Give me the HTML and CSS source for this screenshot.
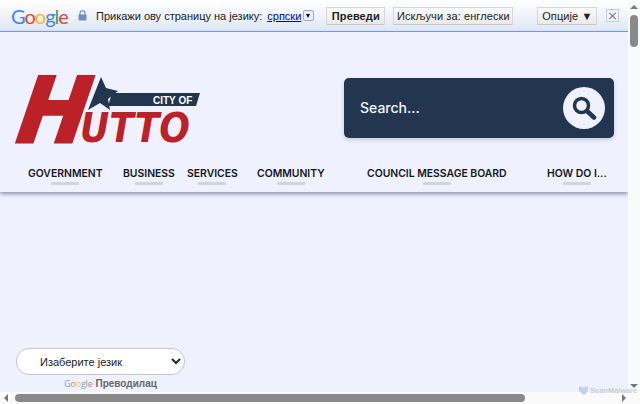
FILE: index.html
```html
<!DOCTYPE html>
<html lang="en">
<head>
    <meta charset="UTF-8">
    <meta name="viewport" content="width=device-width, initial-scale=1.0">
    <title>City of Hutto</title>
    <link rel="stylesheet" href="styles.css">
</head>
<body>
    <div class="window">
        <div class="page">
            <div class="translate-bar">
                <div class="google-logo"><span class="g-blue">G</span><span class="g-red">o</span><span class="g-yellow">o</span><span class="g-blue">g</span><span class="g-green">l</span><span class="g-red">e</span></div>
                <svg class="lock" width="9" height="11" viewBox="0 0 9 11">
                    <path d="M2 5V3.2a2.5 2.5 0 0 1 5 0V5" fill="none" stroke="#7a97c8" stroke-width="1.3"/>
                    <rect x="0.5" y="4.6" width="8" height="6" rx="1" fill="#6d8fc6"/>
                </svg>
                <span class="prompt">Прикажи ову страницу на језику:</span>
                <a class="lang-link" href="#">српски</a>
                <span class="lang-arrow"></span>
                <button class="bar-btn btn-translate">Преведи</button>
                <button class="bar-btn btn-never">Искључи за: енглески</button>
                <button class="bar-btn btn-options">Опције ▼</button>
                <span class="bar-close">
                    <svg width="12" height="12" viewBox="0 0 12 12"><path d="M2.5 2.5l7 7M9.5 2.5l-7 7" stroke="#777" stroke-width="1.2"/></svg>
                </span>
            </div>

            <header class="site-header">
                <div class="brand-row">
                    <svg class="logo" width="190" height="72" viewBox="0 0 190 72">
                        <text class="logo-h" transform="translate(1 68) skewX(-9) scale(0.93 1)">H</text>
                        <text class="logo-utto" x="66" y="68" textLength="110" lengthAdjust="spacingAndGlyphs">UTTO</text>
                        <polygon points="98,19 186,19 182,32 94,32" fill="#22364f"/>
                        <polygon points="87,3 92,14 104,17 94,25 96,36 86,29 74,36" fill="#22364f"/>
                        <text class="logo-cityof" x="139" y="30">CITY OF</text>
                    </svg>
                    <div class="search-box">
                        <span class="search-text">Search...</span>
                        <span class="search-btn">
                            <svg width="26" height="26" viewBox="0 0 26 26">
                                <circle cx="10.5" cy="10.5" r="7" fill="none" stroke="#22364f" stroke-width="3.5"/>
                                <path d="M16 16l7 6.5" stroke="#22364f" stroke-width="4.5" stroke-linecap="round"/>
                            </svg>
                        </span>
                    </div>
                </div>
                <nav class="main-nav">
                    <a class="nav-item" href="#">GOVERNMENT</a>
                    <a class="nav-item" href="#">BUSINESS</a>
                    <a class="nav-item" href="#">SERVICES</a>
                    <a class="nav-item" href="#">COMMUNITY</a>
                    <a class="nav-item" href="#">COUNCIL MESSAGE BOARD</a>
                    <a class="nav-item" href="#">HOW DO I...</a>
                </nav>
            </header>

            <div class="translate-widget">
                <select class="lang-select">
                    <option>Изаберите језик</option>
                </select>
                <div class="powered">
                    <span class="powered-logo"><span class="g-blue">G</span><span class="g-red">o</span><span class="g-yellow">o</span><span class="g-blue">g</span><span class="g-green">l</span><span class="g-red">e</span></span>
                    <span>Преводилац</span>
                </div>
            </div>
        </div>

        <div class="scroll-v">
            <span class="arrow arrow-up"></span>
            <span class="thumb-v"></span>
            <span class="arrow arrow-down"></span>
        </div>
        <div class="scroll-h">
            <span class="arrow arrow-left"></span>
            <span class="thumb-h"></span>
            <span class="arrow arrow-right"></span>
        </div>
        <div class="scroll-corner"></div>

        <div class="watermark">
            <svg width="11" height="11" viewBox="0 0 11 11"><path d="M1 1l4 1.5L10 1v5l-4 4-5-4z" fill="#bcd2f2"/></svg>
            <span>ScanMalware</span>
        </div>
    </div>
</body>
</html>
```

FILE: styles.css
```css
:root {
    --page-bg: #eff1fe;
    --navy: #22364f;
    --red: #bb2127;
    --bar-bg: #fafafb;
}

html, body {
    margin: 0;
    height: 100%;
    overflow: hidden;
}

body {
    font-family: 'Liberation Sans', Arial, sans-serif;
    background-color: var(--bar-bg);
}

.window {
    position: relative;
    display: grid;
    grid-template-columns: 628px 12px;
    grid-template-rows: 392px 12px;
    height: 404px;
}

.page {
    display: flex;
    flex-direction: column;
    background-color: var(--page-bg);
    overflow: hidden;
}

/* translate bar */
.translate-bar {
    display: flex;
    align-items: center;
    height: 32px;
    flex-shrink: 0;
    box-sizing: border-box;
    background: linear-gradient(#ffffff, #dfe7f6);
    border-bottom: 1px solid #7d9ddc;
    box-shadow: 0 1px 3px rgba(107, 144, 218, 0.35);
}

.google-logo {
    font-family: Lato, sans-serif;
    font-size: 20px;
    line-height: 20px;
    width: 55px;
    margin-left: 11px;
    letter-spacing: -1px;
}

.g-blue { color: #4285f4; }
.g-red { color: #ea4335; }
.g-yellow { color: #fbbc05; }
.g-green { color: #34a853; }

.lock {
    margin-left: 12px;
}

.prompt {
    margin-left: 9px;
    font-size: 11px;
    color: #222;
    white-space: nowrap;
}

.lang-link {
    margin-left: 5px;
    font-size: 11px;
    color: #0000cc;
}

.lang-arrow {
    position: relative;
    box-sizing: border-box;
    width: 11px;
    height: 11px;
    margin-left: 2px;
    background-color: #e8eef9;
    border: 1px solid #9aaccb;
    border-radius: 2px;
}

.lang-arrow::after {
    content: "";
    position: absolute;
    left: 2px;
    top: 3px;
    border-left: 2.5px solid transparent;
    border-right: 2.5px solid transparent;
    border-top: 4px solid #000066;
}

.bar-btn {
    box-sizing: border-box;
    height: 18px;
    padding: 0;
    font-family: inherit;
    font-size: 11px;
    letter-spacing: 0.1px;
    color: #222;
    white-space: nowrap;
    background: linear-gradient(#fbfbfb, #e9e9e9);
    border: 1px solid #d6d6d6;
    border-bottom-color: #c4c4c4;
    border-radius: 1px;
}

.btn-translate {
    width: 59px;
    margin-left: 12px;
    font-weight: bold;
}

.btn-never {
    width: 120px;
    margin-left: 8px;
}

.btn-options {
    width: 60px;
    margin-left: 24px;
}

.bar-close {
    display: flex;
    box-sizing: border-box;
    width: 13px;
    height: 13px;
    margin-left: 9px;
    align-items: center;
    justify-content: center;
    border: 1px solid #c4ccd8;
    background-color: #f2f4f9;
}

/* header */
.site-header {
    flex-shrink: 0;
    height: 160px;
    box-sizing: border-box;
    background-color: var(--page-bg);
    box-shadow: 0 2px 4px rgba(60, 65, 90, 0.55);
}

.brand-row {
    display: flex;
    align-items: flex-start;
    padding: 42px 14px 0 14px;
    height: 134px;
    box-sizing: border-box;
}

.logo {
    flex-shrink: 0;
    overflow: visible;
}

.logo-h {
    font-family: 'DejaVu Sans', sans-serif;
    font-weight: bold;
    font-style: italic;
    font-size: 90px;
    fill: var(--red);
    stroke: var(--red);
    stroke-width: 3px;
}

.logo-utto {
    font-family: 'DejaVu Sans', sans-serif;
    font-weight: bold;
    font-style: italic;
    font-size: 40px;
    fill: var(--red);
}

.logo-cityof {
    font-family: 'Liberation Sans', sans-serif;
    font-weight: bold;
    font-size: 10px;
    fill: #fff;
}

.search-box {
    display: flex;
    align-items: center;
    justify-content: space-between;
    box-sizing: border-box;
    width: 270px;
    height: 60px;
    margin-left: 140px;
    margin-top: 4px;
    padding: 0 9px 0 16px;
    background-color: var(--navy);
    border-radius: 5px;
    box-shadow: 0 2px 4px rgba(34, 54, 79, 0.2);
}

.search-text {
    padding-bottom: 2px;
    font-family: Inter, sans-serif;
    font-weight: 500;
    font-size: 14px;
    color: #f2f4fa;
}

.search-btn {
    display: flex;
    align-items: center;
    justify-content: center;
    width: 42px;
    height: 42px;
    border-radius: 50%;
    background-color: var(--page-bg);
}

.main-nav {
    display: grid;
    grid-template-columns: 95px 64px 70px 110px 180px auto;
    padding-left: 28px;
    justify-items: start;
}

.nav-item {
    display: inline-flex;
    flex-direction: column;
    align-items: center;
    font-family: Inter, sans-serif;
    font-weight: 600;
    font-size: 10.4px;
    line-height: 16px;
    color: #14171f;
    white-space: nowrap;
    text-decoration: none;
}

.nav-item::after {
    content: "";
    width: 28px;
    height: 3px;
    background-color: #d1d4db;
}

/* language widget */
.translate-widget {
    margin-top: auto;
    padding: 0 0 2px 16px;
    width: 169px;
}

.lang-select {
    display: block;
    width: 169px;
    height: 27px;
    padding-left: 19px;
    font-family: inherit;
    font-size: 11px;
    color: #222;
    background-color: #fff;
    border: 1px solid #c3c6d2;
    border-radius: 13px;
}

.powered {
    display: flex;
    justify-content: center;
    align-items: center;
    gap: 3px;
    margin-top: 2px;
    padding-left: 20px;
    font-size: 10px;
    line-height: 13px;
    font-weight: bold;
    color: #666;
}

.powered-logo {
    font-family: 'Open Sans', sans-serif;
    font-size: 9px;
    font-weight: normal;
    opacity: 0.7;
    letter-spacing: -0.2px;
}

/* scrollbars */
.scroll-v, .scroll-h, .scroll-corner {
    background-color: var(--bar-bg);
}

.scroll-v {
    display: flex;
    flex-direction: column;
    align-items: center;
    padding-top: 5px;
    box-sizing: border-box;
}

.thumb-v {
    width: 8px;
    height: 32px;
    margin-top: 6px;
    border-radius: 4px;
    background-color: #8a8a8a;
}

.arrow-down {
    margin-top: auto;
    margin-bottom: 4px;
}

.scroll-h {
    grid-column: 1;
    display: flex;
    align-items: center;
    padding-left: 4px;
    box-sizing: border-box;
}

.thumb-h {
    width: 510px;
    height: 8px;
    margin-left: 7px;
    border-radius: 4px;
    background-color: #8a8a8a;
}

.arrow {
    width: 0;
    height: 0;
    border-style: solid;
    border-color: transparent;
}

.arrow-up {
    border-width: 0 4px 4px;
    border-bottom-color: #777;
}

.arrow-down {
    border-width: 4px 4px 0;
    border-top-color: #777;
}

.arrow-left {
    border-width: 4px 4px 4px 0;
    border-right-color: #777;
}

.arrow-right {
    margin-left: auto;
    margin-right: 2px;
    border-width: 4px 0 4px 4px;
    border-left-color: #777;
}

.watermark {
    position: absolute;
    left: 578px;
    top: 385px;
    display: flex;
    align-items: center;
    gap: 1px;
    font-size: 7.5px;
    font-weight: bold;
    color: #c6cdd8;
}
```
